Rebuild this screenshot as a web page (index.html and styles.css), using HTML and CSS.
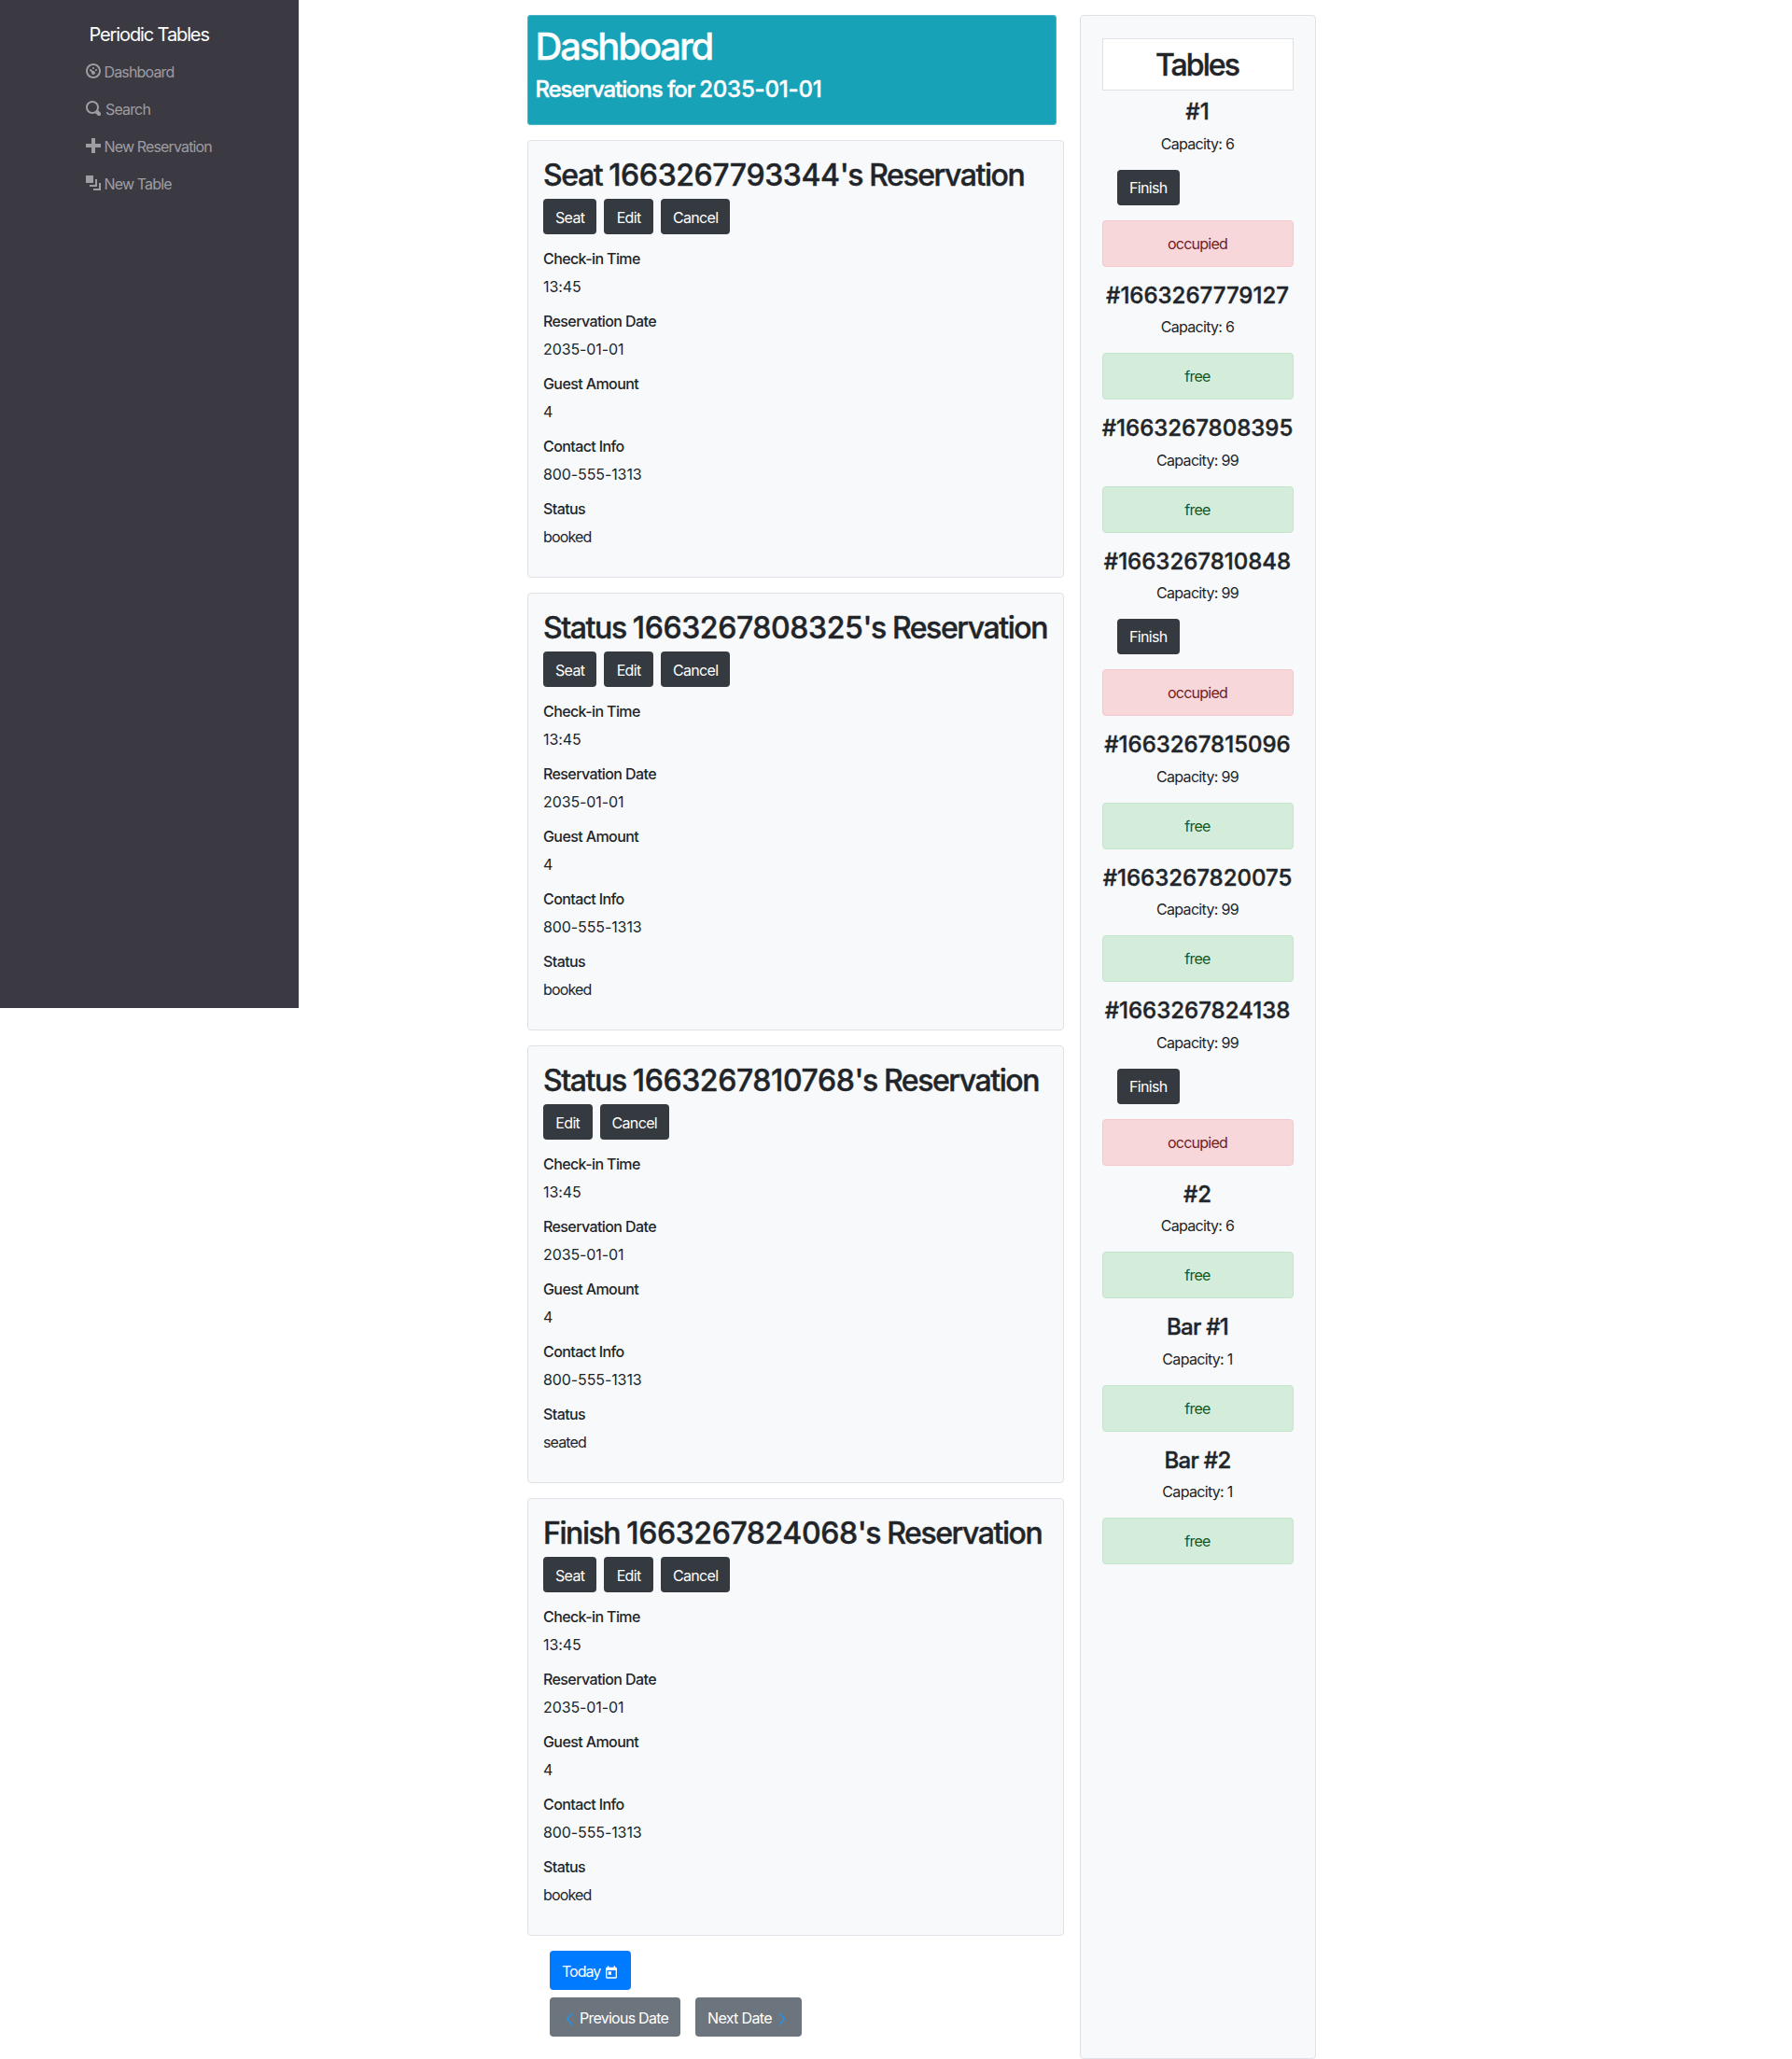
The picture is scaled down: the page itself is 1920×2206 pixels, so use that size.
FILE: index.html
```html
<!DOCTYPE html>
<html lang="en">
<head>
<meta charset="utf-8">
<title>Periodic Tables</title>
<link rel="stylesheet" href="styles.css">
</head>
<body>
<div class="layout">
  <nav class="sidebar">
    <a class="brand">Periodic Tables</a>
    <ul class="menu">
      <li><svg class="oi" viewBox="0 0 8 8"><path d="M4 0c-2.2 0-4 1.8-4 4s1.8 4 4 4 4-1.8 4-4-1.8-4-4-4zm0 1c1.66 0 3 1.34 3 3s-1.34 3-3 3-3-1.34-3-3 1.34-3 3-3zm0 1c-.28 0-.5.22-.5.5s.22.5.5.5.5-.22.5-.5-.22-.5-.5-.5zm-1.66 1a.5.5 0 0 0-.19.84l.91.91c-.02.08-.06.16-.06.25 0 .55.45 1 1 1s1-.45 1-1-.45-1-1-1c-.09 0-.17.04-.25.06l-.91-.91a.5.5 0 0 0-.5-.16zm3.16 0c-.28 0-.5.22-.5.5s.22.5.5.5.5-.22.5-.5-.22-.5-.5-.5z"/></svg><span>Dashboard</span></li>
      <li class="wide"><svg class="oi" viewBox="0 0 8 8"><path d="M3.5 0c-1.93 0-3.5 1.57-3.5 3.5s1.57 3.5 3.5 3.5c.59 0 1.17-.14 1.66-.41a1 1 0 0 0 .13.13l1 1a1.02 1.02 0 1 0 1.44-1.44l-1-1a1 1 0 0 0-.16-.13c.27-.49.44-1.06.44-1.66 0-1.93-1.55-3.5-3.5-3.5zm0 1c1.39 0 2.5 1.11 2.5 2.5 0 .66-.24 1.27-.66 1.72l-.03.03a1 1 0 0 0-.13.13c-.44.4-1.04.63-1.69.63-1.39 0-2.5-1.11-2.5-2.5s1.11-2.5 2.5-2.5z"/></svg><span>Search</span></li>
      <li><svg class="oi" viewBox="0 0 8 8"><path d="M3 0v3h-3v2h3v3h2v-3h3v-2h-3v-3h-2z"/></svg><span>New Reservation</span></li>
      <li><svg class="oi" viewBox="0 0 8 8"><path d="M0 0v4h4v-4h-4zm5 2v3h-3v1h4v-4h-1zm2 2v3h-3v1h4v-4h-1z"/></svg><span>New Table</span></li>
    </ul>
  </nav>
  <main class="content">
    <section class="reservations">
      <header class="banner">
        <h1>Dashboard</h1>
        <h4>Reservations for <span class="num">2035-01-01</span></h4>
      </header>
      <article class="card">
        <h2>Seat <span class="num">1663267793344</span>'s Reservation</h2>
        <div class="actions"><a class="btn">Seat</a><a class="btn">Edit</a><a class="btn">Cancel</a></div>
        <h6>Check-in Time</h6><p class="num">13:45</p>
        <h6>Reservation Date</h6><p class="num">2035-01-01</p>
        <h6>Guest Amount</h6><p class="num">4</p>
        <h6>Contact Info</h6><p class="num">800-555-1313</p>
        <h6>Status</h6><p>booked</p>
      </article>
      <article class="card">
        <h2>Status <span class="num">1663267808325</span>'s Reservation</h2>
        <div class="actions"><a class="btn">Seat</a><a class="btn">Edit</a><a class="btn">Cancel</a></div>
        <h6>Check-in Time</h6><p class="num">13:45</p>
        <h6>Reservation Date</h6><p class="num">2035-01-01</p>
        <h6>Guest Amount</h6><p class="num">4</p>
        <h6>Contact Info</h6><p class="num">800-555-1313</p>
        <h6>Status</h6><p>booked</p>
      </article>
      <article class="card">
        <h2>Status <span class="num">1663267810768</span>'s Reservation</h2>
        <div class="actions"><a class="btn">Edit</a><a class="btn">Cancel</a></div>
        <h6>Check-in Time</h6><p class="num">13:45</p>
        <h6>Reservation Date</h6><p class="num">2035-01-01</p>
        <h6>Guest Amount</h6><p class="num">4</p>
        <h6>Contact Info</h6><p class="num">800-555-1313</p>
        <h6>Status</h6><p>seated</p>
      </article>
      <article class="card">
        <h2>Finish <span class="num">1663267824068</span>'s Reservation</h2>
        <div class="actions"><a class="btn">Seat</a><a class="btn">Edit</a><a class="btn">Cancel</a></div>
        <h6>Check-in Time</h6><p class="num">13:45</p>
        <h6>Reservation Date</h6><p class="num">2035-01-01</p>
        <h6>Guest Amount</h6><p class="num">4</p>
        <h6>Contact Info</h6><p class="num">800-555-1313</p>
        <h6>Status</h6><p>booked</p>
      </article>
      <div class="pager">
        <a class="btn today"><span>Today</span><svg class="cal" viewBox="0 0 24 24"><path d="M19 4h-1V2h-2v2H8V2H6v2H5c-1.110 0-1.990.9-1.990 2L3 20c0 1.100.890 2 2 2h14c1.100 0 2-.9 2-2V6c0-1.100-.9-2-2-2zm0 16H5V9h14v11zM7 11h5v5H7z"/></svg></a>
        <div class="steps">
          <a class="btn prev"><svg class="chev" viewBox="0 0 8 14"><path d="M7 1 1.500 7 7 13"/></svg><span>Previous Date</span></a>
          <a class="btn next"><span>Next Date</span><svg class="chev" viewBox="0 0 8 14"><path d="M1 1 6.500 7 1 13"/></svg></a>
        </div>
      </div>
    </section>
    <aside class="tables">
      <h2 class="tables-title">Tables</h2>
      <div class="table"><h4>#1</h4><p>Capacity: 6</p><a class="btn">Finish</a><div class="alert occupied">occupied</div></div>
      <div class="table"><h4>#1663267779127</h4><p>Capacity: 6</p><div class="alert free">free</div></div>
      <div class="table"><h4>#1663267808395</h4><p>Capacity: 99</p><div class="alert free">free</div></div>
      <div class="table"><h4>#1663267810848</h4><p>Capacity: 99</p><a class="btn">Finish</a><div class="alert occupied">occupied</div></div>
      <div class="table"><h4>#1663267815096</h4><p>Capacity: 99</p><div class="alert free">free</div></div>
      <div class="table"><h4>#1663267820075</h4><p>Capacity: 99</p><div class="alert free">free</div></div>
      <div class="table"><h4>#1663267824138</h4><p>Capacity: 99</p><a class="btn">Finish</a><div class="alert occupied">occupied</div></div>
      <div class="table"><h4>#2</h4><p>Capacity: 6</p><div class="alert free">free</div></div>
      <div class="table"><h4 class="named">Bar #1</h4><p>Capacity: 1</p><div class="alert free">free</div></div>
      <div class="table"><h4 class="named">Bar #2</h4><p>Capacity: 1</p><div class="alert free">free</div></div>
    </aside>
  </main>
</div>
</body>
</html>
```
FILE: styles.css
```css
* { box-sizing: border-box; }
body {
  margin: 0;
  background: #fff;
  color: #212529;
  font-family: Inter, "Liberation Sans", sans-serif;
  font-size: 16px;
  line-height: 24px;
  letter-spacing: -0.75px;
}
h1, h2, h4, h6, p, ul { margin: 0; padding: 0; }
h1, h2, h4 { font-weight: 500; white-space: nowrap; -webkit-text-stroke: 0.4px currentColor; }
.layout { display: flex; align-items: flex-start; height: 2206px; }
.sidebar { flex: none; width: 320px; height: 1080px; padding: 23px 0 0 92px; background: #3b3a43; }
.brand { display: block; height: 34px; padding-left: 3.500px; font-size: 20px; line-height: 28px; letter-spacing: -1.12px; color: #fff; }
.menu { list-style: none; color: #9e9da1; letter-spacing: -0.85px; }
.menu li { display: flex; height: 40px; padding-top: 8px; gap: 3.500px; }
.menu .wide { gap: 5px; }
.oi { width: 16px; height: 16px; margin-top: 3px; fill: currentColor; }
.content { display: flex; gap: 17px; padding: 16px 0 0 245px; }
.reservations { display: flex; flex: none; flex-direction: column; gap: 16px; width: 575px; }
.banner { width: 567px; height: 118px; padding: 9px 9px 0 8.500px; border-radius: 4px; background: #17a2b8; color: #fff; box-shadow: inset 0 0 0 1px #4cb4c6; }
.banner h1 { font-size: 40px; line-height: 50px; margin-bottom: 6px; letter-spacing: -2.1px; }
.banner h4 { font-size: 24px; line-height: 30px; letter-spacing: -1.1px; }
.banner .num { letter-spacing: -0.2px; }
.card { height: 469px; padding: 16px; border: 1px solid #dee2e6; border-radius: 4px; background: #f8f9fa; }
.card h2 { height: 38px; margin-bottom: 8px; font-size: 32px; line-height: 42px; letter-spacing: -1.43px; }
.card h2 .num { letter-spacing: -0.4px; }
.card h6 { font-size: 16px; font-weight: 500; line-height: 19px; margin-bottom: 8px; letter-spacing: -0.6px; }
.card p { margin-bottom: 16px; letter-spacing: -0.85px; }
.card p.num { letter-spacing: -0.1px; }
.actions { display: flex; gap: 8px; margin-bottom: 17px; }
.btn { display: inline-block; min-width: 52.500px; height: 38px; padding: 8px 13px 6px; border-radius: 4px; background: #343a40; color: #fff; letter-spacing: -0.65px; text-align: center; white-space: nowrap; }
.pager { padding-left: 24px; }
.pager .btn { display: flex; height: 42px; padding-top: 10px; }
.pager .today { width: 87px; background: #007bff; gap: 4px; letter-spacing: -1px; }
.cal { flex: none; width: 16px; height: 16px; margin-top: 5px; fill: #fff; }
.steps { display: flex; gap: 16px; margin-top: 8px; }
.steps .btn { background: #6c757d; }
.steps .prev { width: 140px; padding-left: 17px; gap: 7px; letter-spacing: -0.75px; }
.steps .next { width: 114px; gap: 7px; }
.chev { flex: none; width: 8px; height: 14px; margin-top: 6px; fill: none; stroke: #2196f3; stroke-width: 1.300; }
.tables { flex: none; width: 253px; height: 2190px; padding: 24px 23px; border: 1px solid #dee2e6; border-radius: 4px; background: #f8f9fa; text-align: center; }
.tables-title { height: 56px; margin-bottom: 8px; padding-right: 2px; border: 1px solid #dee2e6; background: #fff; font-size: 32px; line-height: 56px; letter-spacing: -1.9px; }
.table { display: flex; flex-direction: column; margin-bottom: 16px; }
.table h4 { height: 28.500px; margin: 0 -2px 8px -3px; font-size: 24px; line-height: 29.500px; letter-spacing: 0; }
.table .named { letter-spacing: -0.7px; }
.table p { margin-bottom: 16px; padding-right: 1px; letter-spacing: -0.68px; }
.table .btn { align-self: flex-start; margin: 0 0 16px 16px; padding-top: 7px; }
.alert { height: 50px; padding-right: 1px; line-height: 48px; border: 1px solid; border-radius: 4px; }
.occupied { color: #721c24; background: #f8d7da; border-color: #f5c6cb; }
.free { color: #155724; background: #d4edda; border-color: #c3e6cb; }
```
